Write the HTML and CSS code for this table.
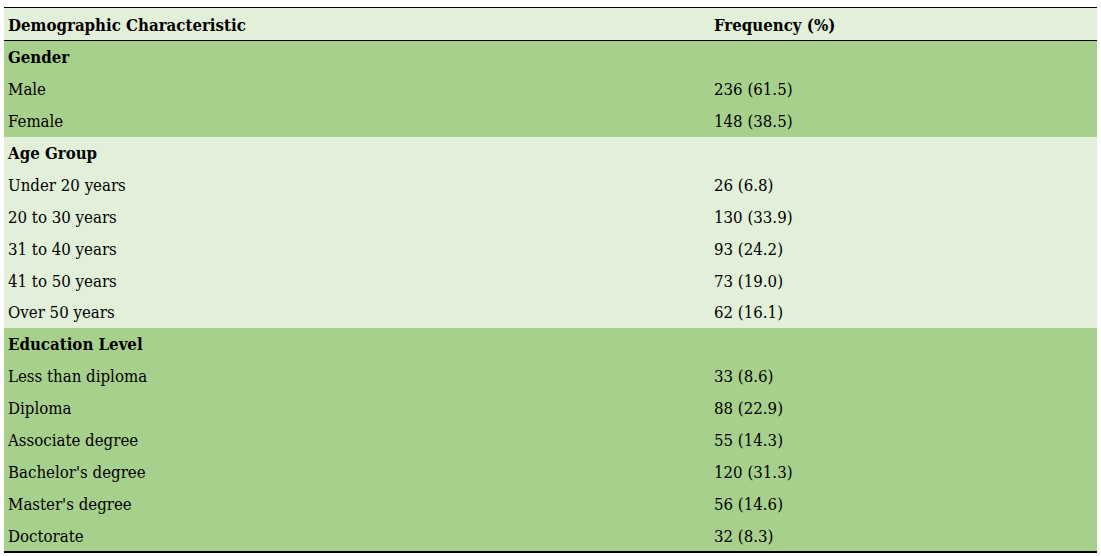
FILE: index.html
```html
<!DOCTYPE html>
<html>
<head>
<meta charset="utf-8">
<link rel="stylesheet" href="styles.css">
</head>
<body>
<table class="demo">
  <thead>
    <tr><th class="c1">Demographic Characteristic</th><th class="c2">Frequency (%)</th></tr>
  </thead>
  <tbody class="dark">
    <tr class="group"><td>Gender</td><td></td></tr>
    <tr><td>Male</td><td>236 (61.5)</td></tr>
    <tr><td>Female</td><td>148 (38.5)</td></tr>
  </tbody>
  <tbody class="light">
    <tr class="group"><td>Age Group</td><td></td></tr>
    <tr><td>Under 20 years</td><td>26 (6.8)</td></tr>
    <tr><td>20 to 30 years</td><td>130 (33.9)</td></tr>
    <tr><td>31 to 40 years</td><td>93 (24.2)</td></tr>
    <tr><td>41 to 50 years</td><td>73 (19.0)</td></tr>
    <tr><td>Over 50 years</td><td>62 (16.1)</td></tr>
  </tbody>
  <tbody class="dark last">
    <tr class="group"><td>Education Level</td><td></td></tr>
    <tr><td>Less than diploma</td><td>33 (8.6)</td></tr>
    <tr><td>Diploma</td><td>88 (22.9)</td></tr>
    <tr><td>Associate degree</td><td>55 (14.3)</td></tr>
    <tr><td>Bachelor's degree</td><td>120 (31.3)</td></tr>
    <tr><td>Master's degree</td><td>56 (14.6)</td></tr>
    <tr><td>Doctorate</td><td>32 (8.3)</td></tr>
  </tbody>
</table>
</body>
</html>
```
FILE: styles.css
```css
html, body {
  margin: 0;
  padding: 0;
  background: #ffffff;
}
body {
  padding: 7px 4px 0 4px;
  font-family: "DejaVu Serif Condensed", "DejaVu Serif", serif;
  font-size: 16.7px;
  color: #000;
}
.demo {
  width: 1093px;
  border-collapse: collapse;
  border-top: 1px solid #000;
  border-bottom: 2px solid #000;
}
.demo th, .demo td {
  padding: 1px 0 0 4px;
  height: 30.875px;
  text-align: left;
  vertical-align: middle;
  white-space: nowrap;
  line-height: 20px;
}
.demo thead th {
  background: #e2efd9;
  font-weight: bold;
  height: 31px;
  border-bottom: 1px solid #000;
}
.demo .c1 { width: 702px; }
.dark td { background: #a8d08d; }
.light td { background: #e2efd9; }
.group td { font-weight: bold; }
```
